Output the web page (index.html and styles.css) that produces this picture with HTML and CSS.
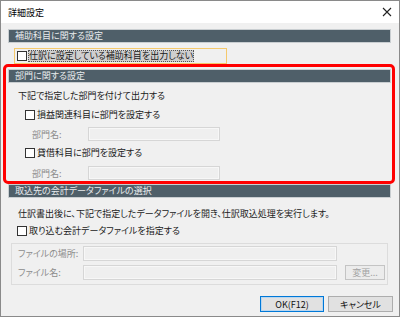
FILE: index.html
```html
<!DOCTYPE html>
<html lang="ja">
<head>
    <meta charset="UTF-8">
    <title>詳細設定</title>
    <link rel="stylesheet" href="styles.css">
</head>
<body>
    <div class="window">
        <div class="titlebar">
            <span class="title">詳細設定</span>
            <svg class="close" width="10" height="10" viewBox="0 0 10 10">
                <path d="M1 1 L9 9 M9 1 L1 9" stroke="#222" stroke-width="1.1" fill="none"/>
            </svg>
        </div>

        <div class="content">
            <div class="section-head">補助科目に関する設定</div>
            <div class="focus-row">
                <span class="checkbox"></span>
                <span class="focus-label">仕訳に設定している補助科目を出力しない</span>
            </div>

            <!-- 赤枠で囲まれた部門設定 -->
            <div class="marked">
                <div class="section-head inner">部門に関する設定</div>
                <div class="line intro">下記で指定した部門を付けて出力する</div>
                <div class="line check-row">
                    <span class="checkbox"></span>
                    <span>損益関連科目に部門を設定する</span>
                </div>
                <div class="field-row first">
                    <span class="field-label">部門名:</span>
                    <span class="input"></span>
                </div>
                <div class="line check-row second">
                    <span class="checkbox"></span>
                    <span>貸借科目に部門を設定する</span>
                </div>
                <div class="field-row last">
                    <span class="field-label">部門名:</span>
                    <span class="input"></span>
                </div>
            </div>

            <div class="section-head after-mark">取込先の会計データファイルの選択</div>
            <div class="line intro2">仕訳書出後に、下記で指定したデータファイルを開き、仕訳取込処理を実行します。</div>
            <div class="line check-row2">
                <span class="checkbox"></span>
                <span>取り込む会計データファイルを指定する</span>
            </div>
            <div class="group">
                <div class="group-row">
                    <span class="group-label">ファイルの場所:</span>
                    <span class="input wide"></span>
                </div>
                <div class="group-row gap">
                    <span class="group-label">ファイル名:</span>
                    <span class="input wide"></span>
                    <span class="btn small">変更...</span>
                </div>
            </div>

            <div class="actions">
                <span class="btn default">OK(F12)</span>
                <span class="btn">キャンセル</span>
            </div>
        </div>
    </div>
</body>
</html>
```

FILE: styles.css
```css
:root {
    --bg: #f0f0f0;
    --head-bg: #4f5f69;
    --head-text: #e8ebed;
    --disabled: #8c8c8c;
    --input-border: #d6d6d6;
}

body {
    margin: 0;
    font-family: "Noto Sans CJK JP", "Noto Sans", sans-serif;
    font-feature-settings: "palt";
    font-size: 9px;
    color: #1a1a1a;
}

.window {
    width: 400px;
    height: 317px;
    box-sizing: border-box;
    border: 1px solid #8a8a8a;
    background-color: var(--bg);
}

.titlebar {
    height: 22px;
    background-color: #fff;
    display: flex;
    align-items: center;
    justify-content: space-between;
    padding: 0 6px 0 7px;
}

.title {
    font-size: 9px;
    color: #000;
}

.close {
    margin-right: 1px;
}

.content {
    display: flex;
    flex-direction: column;
    align-items: flex-start;
}

.section-head {
    box-sizing: border-box;
    width: 383px;
    height: 14px;
    margin: 6px 0 0 7px;
    padding-left: 6px;
    background-color: var(--head-bg);
    border: 1px solid #c9ced1;
    color: var(--head-text);
    line-height: 12px;
}

.section-head.inner {
    margin: 2px 0 0 2px;
}

.section-head.after-mark {
    margin-top: 0;
}

.focus-row {
    box-sizing: border-box;
    width: 213px;
    height: 16px;
    margin: 5px 0 0 13px;
    padding-left: 2px;
    border: 1px solid #f5c96c;
    display: flex;
    align-items: center;
}

.focus-label {
    margin-left: 1px;
    padding: 0 1px;
    line-height: 12px;
    background-color: #cfcfcf;
    outline: 1px dotted #555;
    outline-offset: -1px;
}

.checkbox {
    width: 10px;
    height: 10px;
    box-sizing: border-box;
    border: 1px solid #333;
    background-color: #fff;
    flex-shrink: 0;
}

.line {
    height: 13px;
    line-height: 13px;
    display: flex;
    align-items: center;
}

.check-row .checkbox,
.check-row2 .checkbox {
    margin-right: 2px;
}

/* 赤い注目枠 */
.marked {
    box-sizing: border-box;
    width: 392px;
    margin: 0 0 0 2px;
    border: 3px solid #ff0000;
    border-radius: 5px;
    padding-bottom: 1px;
    display: flex;
    flex-direction: column;
    align-items: flex-start;
}

.intro {
    margin-top: 6px;
    padding-left: 12px;
}

.check-row {
    margin-top: 6px;
    padding-left: 19px;
}

.check-row.second {
    margin-top: 5px;
}

.field-row {
    display: flex;
    align-items: center;
    height: 14px;
    padding-left: 26px;
    margin-top: 6px;
}

.field-row.last {
    margin-top: 7px;
}

.field-label {
    width: 56px;
    color: var(--disabled);
}

.input {
    box-sizing: border-box;
    width: 132px;
    height: 14px;
    border: 1px solid var(--input-border);
    background-color: #efefef;
    box-shadow: inset 0 0 0 1px #f7f7f7;
}

.intro2 {
    margin-top: 9px;
    padding-left: 17px;
}

.check-row2 {
    margin-top: 4px;
    padding-left: 16px;
}

.group {
    box-sizing: border-box;
    width: 377px;
    height: 42px;
    margin: 6px 0 0 10px;
    padding: 2px 0 0 6px;
    border: 1px solid #dcdcdc;
}

.group-row {
    display: flex;
    align-items: center;
    height: 15px;
}

.group-row.gap {
    margin-top: 4px;
}

.group-label {
    width: 65px;
    color: var(--disabled);
}

.input.wide {
    width: 254px;
    height: 15px;
}

.btn {
    box-sizing: border-box;
    height: 16px;
    width: 65px;
    border: 1px solid #adadad;
    background-color: #e1e1e1;
    display: flex;
    align-items: center;
    justify-content: center;
    color: #111;
}

.btn.small {
    width: 40px;
    height: 15px;
    margin-left: 8px;
    background-color: #ececec;
    border-color: #c4c4c4;
    color: #a3a3a3;
}

.btn.default {
    width: 64px;
    border-color: #0078d7;
    box-shadow: inset 0 0 0 1px #b9d6ef;
}

.actions {
    align-self: stretch;
    display: flex;
    justify-content: flex-end;
    gap: 4px;
    margin-top: 11px;
    padding-right: 6px;
}
```
